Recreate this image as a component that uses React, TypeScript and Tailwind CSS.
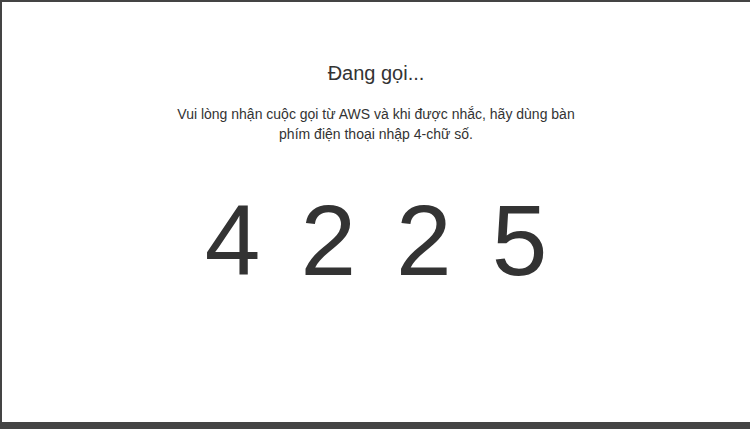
export default function App() {
  const digits = ["4", "2", "2", "5"];

  return (
    <div className="flex h-screen flex-col bg-white font-['Liberation_Sans',Arial,sans-serif] text-[#333]">
      <main className="flex flex-1 flex-col items-center border-l-2 border-t-2 border-[#444] pt-[57px]">
        <h1 className="text-[20px] leading-[28px]">Đang gọi...</h1>
        <p className="mt-[17px] w-[410px] text-center text-[14px] leading-[20px]">
          Vui lòng nhận cuộc gọi từ AWS và khi được nhắc, hãy dùng bàn phím điện thoại nhập 4-chữ số.
        </p>
        <div className="mt-[46px] flex gap-[40px] text-[100px] leading-[100px]">
          {digits.map((digit, index) => (
            <span key={index}>{digit}</span>
          ))}
        </div>
      </main>
      <div className="h-[7px] bg-[#444]" />
    </div>
  );
}
